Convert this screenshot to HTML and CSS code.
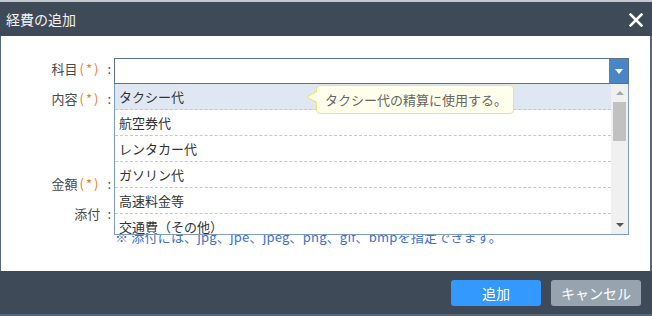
FILE: index.html
```html
<!DOCTYPE html>
<html lang="ja">
<head>
<meta charset="utf-8">
<link rel="stylesheet" href="styles.css">
</head>
<body>
<div class="dialog">
  <div class="header">
    <span class="title">経費の追加</span>
    <svg class="close" width="14" height="14" viewBox="0 0 14 14"><path d="M1.5 1.5 L12.5 12.5 M12.5 1.5 L1.5 12.5" stroke="#fff" stroke-width="2.6" stroke-linecap="square"/></svg>
  </div>
  <div class="content">
    <div class="form">
      <div class="row row-subject">
        <div class="label">科目<span class="req">(*)</span><span class="colon">:</span></div>
        <div class="field">
          <div class="select">
            <div class="select-btn"><span class="tri"></span></div>
          </div>
          <div class="list">
            <div class="items">
              <div class="item active">タクシー代</div>
              <div class="item">航空券代</div>
              <div class="item">レンタカー代</div>
              <div class="item">ガソリン代</div>
              <div class="item">高速料金等</div>
              <div class="item">交通費（その他）</div>
            </div>
            <div class="scrollbar">
              <span class="arrow-up"></span>
              <span class="thumb"></span>
              <span class="arrow-down"></span>
            </div>
            <div class="tooltip">タクシー代の精算に使用する。</div>
          </div>
        </div>
      </div>
      <div class="row row-content">
        <div class="label">内容<span class="req">(*)</span><span class="colon">:</span></div>
        <div class="field"><div class="textarea"></div></div>
      </div>
      <div class="row row-amount">
        <div class="label">金額<span class="req">(*)</span><span class="colon">:</span></div>
        <div class="field"></div>
      </div>
      <div class="row row-attach">
        <div class="label">添付<span class="colon">:</span></div>
        <div class="field"></div>
      </div>
      <div class="row row-hint">
        <div class="label"></div>
        <div class="hint">※ 添付には、jpg、jpe、jpeg、png、gif、bmpを指定できます。</div>
      </div>
    </div>
  </div>
  <div class="footer">
    <button class="btn btn-primary">追加</button>
    <button class="btn btn-cancel">キャンセル</button>
  </div>
</div>
</body>
</html>
```

FILE: styles.css
```css
html, body {
  margin: 0;
  padding: 0;
}
body {
  background: #c4c7cc;
  font-family: "Noto Sans CJK JP", "Noto Sans", sans-serif;
  font-size: 13px;
  color: #333;
  width: 652px;
  height: 316px;
  overflow: hidden;
}
.dialog {
  margin-top: 2px;
  height: 314px;
  background: #56677a;
  display: flex;
  flex-direction: column;
}
.header {
  height: 34px;
  background: #3e4a58;
  display: flex;
  align-items: center;
  justify-content: space-between;
  padding: 0 9px 0 6px;
  flex: none;
}
.title {
  color: #f2f2f2;
  font-size: 14px;
  line-height: 20px;
  margin-top: -1px;
}
.close {
  display: block;
  margin-top: 1px;
}
.content {
  height: 235px;
  background: #fff;
  margin: 0 2px 0 1px;
  flex: none;
  position: relative;
}
.form {
  padding-top: 22px;
  padding-right: 21px;
  display: flex;
  flex-direction: column;
}
.row {
  display: flex;
}
.label {
  width: 113px;
  flex: none;
  text-align: right;
  color: #4a4a4a;
  font-size: 13px;
  white-space: nowrap;
  box-sizing: border-box;
  padding-right: 3px;
}
.req {
  color: #f07a22;
  letter-spacing: 2px;
  margin-left: 2px;
}
.colon {
  margin-left: 7px;
}
.field {
  flex: 1;
  position: relative;
}
.row-subject {
  height: 26px;
}
.row-subject .label {
  line-height: 22px;
}
.select {
  height: 26px;
  box-sizing: border-box;
  border: 1px solid #5d708a;
  background: #fff;
  display: flex;
  justify-content: flex-end;
}
.select-btn {
  width: 19px;
  background: #4a86c6;
  display: flex;
  align-items: center;
  justify-content: center;
}
.tri {
  width: 0;
  height: 0;
  border-left: 4px solid transparent;
  border-right: 4px solid transparent;
  border-top: 5px solid #fff;
  margin-top: 1px;
}
.list {
  position: absolute;
  top: 26px;
  left: 0;
  right: 0;
  height: 151px;
  box-sizing: border-box;
  border: 1px solid #7f9cbd;
  border-top: none;
  background: #fff;
  overflow: hidden;
  z-index: 5;
}
.items {
  margin-right: 17px;
}
.item {
  height: 25px;
  line-height: 25px;
  border-bottom: 1px dashed #c8c8c8;
  padding-left: 4px;
  color: #333;
  white-space: nowrap;
}
.item.active {
  background: #dfe8f2;
}
.scrollbar {
  position: absolute;
  top: 0;
  right: 0;
  bottom: 0;
  width: 17px;
  background: #f0f0f0;
}
.arrow-up {
  position: absolute;
  top: 7px;
  left: 5px;
  width: 0;
  height: 0;
  border-left: 4px solid transparent;
  border-right: 4px solid transparent;
  border-bottom: 4px solid #a6a6a6;
}
.arrow-down {
  position: absolute;
  bottom: 7px;
  left: 5px;
  width: 0;
  height: 0;
  border-left: 4px solid transparent;
  border-right: 4px solid transparent;
  border-top: 4px solid #555;
}
.thumb {
  position: absolute;
  top: 18px;
  left: 2px;
  width: 13px;
  height: 39px;
  background: #c1c1c1;
}
.tooltip {
  position: absolute;
  left: 201px;
  top: 1px;
  width: 198px;
  height: 29px;
  box-sizing: border-box;
  background: #ffffec;
  border: 1px solid #f3e27c;
  border-radius: 4px;
  color: #666;
  padding-left: 8px;
  line-height: 27px;
  white-space: nowrap;
}
.tooltip::before {
  content: "";
  position: absolute;
  left: -11px;
  top: 5px;
  border-top: 6px solid transparent;
  border-bottom: 6px solid transparent;
  border-right: 10px solid #f3e27c;
}
.tooltip::after {
  content: "";
  position: absolute;
  left: -9px;
  top: 6px;
  border-top: 5px solid transparent;
  border-bottom: 5px solid transparent;
  border-right: 9px solid #ffffec;
}
.row-content {
  margin-top: 4px;
  height: 80px;
}
.row-content .label {
  line-height: 22px;
}
.textarea {
  height: 80px;
  box-sizing: border-box;
  border: 1px solid #aab;
}
.row-amount {
  margin-top: 4px;
  height: 24px;
}
.row-amount .label,
.row-attach .label {
  line-height: 24px;
}
.row-attach {
  margin-top: 6px;
  height: 24px;
}
.row-hint {
  margin-top: 3px;
}
.hint {
  color: #3b6fd0;
  font-size: 13px;
  line-height: 16px;
  padding-left: 1px;
  letter-spacing: 0.2px;
  white-space: nowrap;
}
.footer {
  flex: 1;
  background: #3e4a58;
  margin: 0 0 2px 0;
  display: flex;
  justify-content: flex-end;
  align-items: flex-start;
  gap: 10px;
  padding: 9px 11px 0 0;
}
.btn {
  width: 90px;
  height: 26px;
  border: none;
  border-radius: 3px;
  color: #fff;
  font-family: "Noto Sans CJK JP", "Noto Sans", sans-serif;
  font-size: 14px;
  line-height: 26px;
  padding: 0;
  cursor: pointer;
}
.btn-primary {
  background: #3399fe;
}
.btn-cancel {
  background: #98a3b0;
}
```
